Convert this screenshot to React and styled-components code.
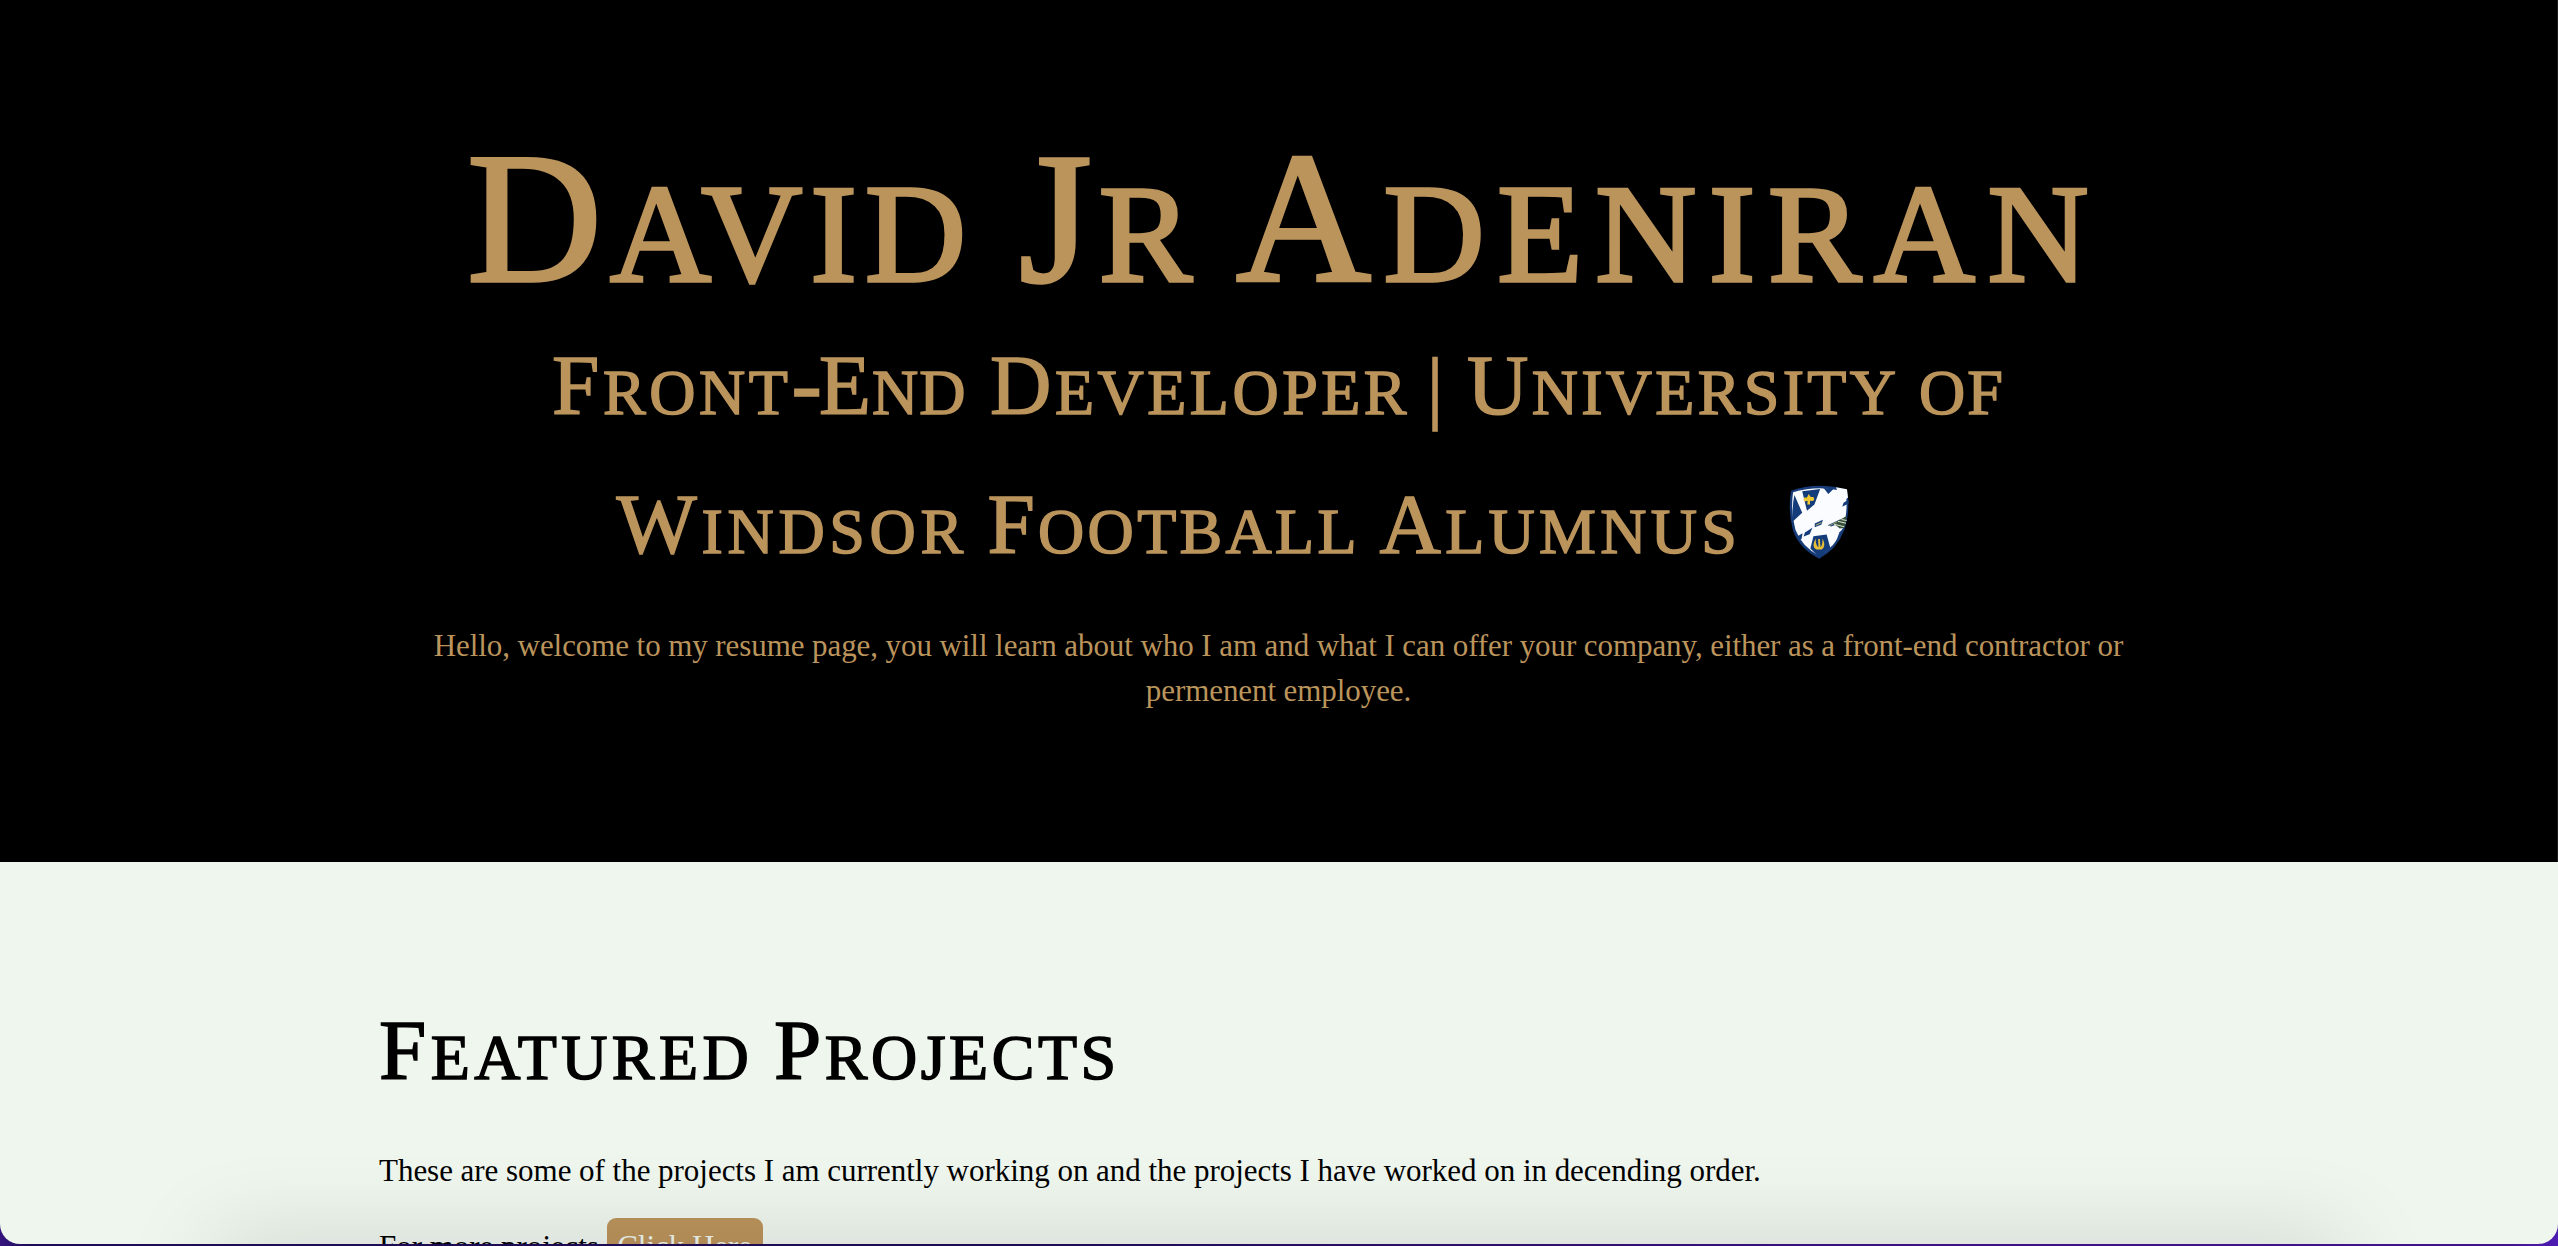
import React from "react";
import styled, { createGlobalStyle } from "styled-components";

const GlobalStyle = createGlobalStyle`
  * { box-sizing: border-box; }
  html, body { margin: 0; height: 1246px; overflow: hidden; }
  body { background: #281070; }
`;

const Desktop = styled.div`
  width: 2558px;
  height: 1246px;
  overflow: hidden;
  background: linear-gradient(90deg, #34157f 0, #1e0c56 30px, #1d0b52 40%, #3c1184 75%, #42138c 98%, #4d1cb4 100%);
`;

const Browser = styled.main`
  position: relative;
  height: 1244px;
  overflow: hidden;
  border-radius: 0 0 20px 20px;
  background: #eff6ee;
  font-family: "Liberation Serif", "Times New Roman", serif;
`;

const Hero = styled.header`
  height: 862px;
  padding-top: 105px;
  border-right: 1px solid #1c1c1c;
  background: #000;
  color: #bb945c;
`;

const Heading = styled.div`
  display: flex;
  justify-content: ${(p) => p.$align || "center"};
  height: ${(p) => p.$height}px;
  line-height: ${(p) => p.$height}px;
  font-size: ${(p) => p.$size}px;
`;

const Title = styled.h1`
  margin: 0;
  font-weight: 400;
`;

const Subtitle = styled.h2`
  margin: ${(p) => p.$top || 0}px 0 0;
  font-weight: 400;
`;

const Word = styled.span`
  display: block;
  flex: none;
  width: ${(p) => p.$w}px;
  margin-left: ${(p) => p.$gap || 0}px;
  font-size: 1.071em;
  font-variant-caps: small-caps;
  letter-spacing: ${(p) => p.$ls || 0}px;
  white-space: nowrap;
  -webkit-text-stroke: 0.017em currentColor;
  &::first-letter {
    font-size: ${(p) => p.$first || "0.934em"};
  }
`;

const Shield = styled.svg`
  flex: none;
  width: 60px;
  height: 74px;
  margin: 32px 92px 0 52px;
`;

const Intro = styled.p`
  margin: 31px auto 0;
  width: 1720px;
  text-align: center;
  font-size: 31px;
  line-height: 45px;
  letter-spacing: -0.08px;
`;

const Projects = styled.section`
  padding: 127px 0 0 379px;
  color: #000;
`;

const Copy = styled.p`
  margin: ${(p) => p.$top}px 0 0;
  height: 45px;
  font-size: 31px;
  line-height: 45px;
  letter-spacing: -0.03px;
  white-space: nowrap;
`;

const Button = styled.a`
  display: inline-block;
  width: 156px;
  height: 56px;
  padding-top: 6px;
  border-radius: 9px;
  background: #bb945c;
  color: #eff6ee;
  text-align: center;
`;

const DockShadow = styled.div`
  position: absolute;
  left: 210px;
  right: 210px;
  bottom: -46px;
  height: 46px;
  border-radius: 23px;
  box-shadow: 0 0 90px 2px rgba(0, 0, 0, 0.17);
  pointer-events: none;
`;

function Crest() {
  return (
    <Shield viewBox="58 43 177 221" preserveAspectRatio="none" aria-label="Crest">
      <path d="M64 60Q145 32 229 58Q240 125 220 180Q200 235 147 263Q90 235 70 180Q54 120 64 60Z" fill="#173b78" />
      <path d="M70 65Q145 41 225 63Q234 124 215 177Q195 228 147 254Q96 228 77 177Q62 120 70 65Z" fill="#fbfcff" />
      <path d="M74 73L97 126L70 151Q66 110 74 73ZM97 62L150 55L133 101L111 120ZM160 52L190 54L174 70Z" fill="#143c7b" />
      <path d="M219 96L234 86V98L215 108ZM172 163L210 145L200 160L182 167ZM134 158L158 147L154 161L134 169ZM83 196L98 187L95 204L87 209ZM105 185L127 171L119 190L101 197Z" fill="#143c7b" />
      <path d="M130 196L169 191L180 231L147 258L121 233Z" fill="#143c7b" />
      <path d="M219 172L216 185L192 224L207 184Z" fill="#143c7b" />
      <path d="M189 158L229 135L222 171L208 173Z" fill="#33503f" />
      <path d="M191 160L221 168M202 151L226 157M213 146L228 149" stroke="#d9dfbd" strokeWidth="3" />
      <path d="M137 163L154 155M176 165L200 153" stroke="#a7ad72" strokeWidth="3" />
      <path d="M197 50L229 56L232 80L210 98Z" fill="#fbfcff" />
      <path d="M116 70L122 79L130 79Q135 88 128 91L120 90L120 101H112L113 90L105 92Q98 87 103 80L111 80Z" fill="#f0c834" />
      <path d="M137 203Q122 228 139 236H154Q169 226 157 203Q157 223 151 229L149 204H144L145 229Q136 224 137 203Z" fill="#e6bf37" />
    </Shield>
  );
}

export default function App() {
  return (
    <Desktop>
      <GlobalStyle />
      <Browser>
        <Hero>
          <Title>
            <Heading $size={187} $height={218}>
              <Word $w={500} $ls={8}>David</Word>{" "}
              <Word $w={177} $gap={52} $ls={7}>Jr</Word>{" "}
              <Word $w={854} $gap={40} $ls={12.5}>Adeniran</Word>
            </Heading>
          </Title>
          <Subtitle $top={-9}>
            <Heading $size={85} $height={139}>
              <Word $w={265} $ls={3.6}>Front-</Word>
              <Word $w={147} $gap={2} $ls={1}>End</Word>{" "}
              <Word $w={419} $gap={24} $ls={3.5}>Developer</Word>{" "}
              <Word $w={14} $gap={18} $first="0.88em">|</Word>{" "}
              <Word $w={429} $gap={26} $ls={3.3}>University</Word>{" "}
              <Word $w={86} $gap={23} $ls={2} $first="1em">of</Word>
            </Heading>
            <Heading $size={85} $height={139}>
              <Word $w={348} $ls={4.7}>Windsor</Word>{" "}
              <Word $w={370} $gap={23} $ls={3.3}>Football</Word>{" "}
              <Word $w={357} $gap={22} $ls={4.3}>Alumnus</Word>
              <Crest />
            </Heading>
          </Subtitle>
          <Intro>
            Hello, welcome to my resume page, you will learn about who I am and what I can offer your company, either as a front-end contractor or permenent employee.
          </Intro>
        </Hero>
        <Projects>
          <Subtitle>
            <Heading $size={85} $height={120} $align="flex-start">
              <Word $w={370} $ls={4.4}>Featured</Word>{" "}
              <Word $w={340} $gap={25} $ls={3.5}>Projects</Word>
            </Heading>
          </Subtitle>
          <Copy $top={39}>
            These are some of the projects I am currently working on and the projects I have worked on in decending order.
          </Copy>
          <Copy $top={25}>
            For more projects <Button>Click Here</Button>
          </Copy>
        </Projects>
        <DockShadow />
      </Browser>
    </Desktop>
  );
}
